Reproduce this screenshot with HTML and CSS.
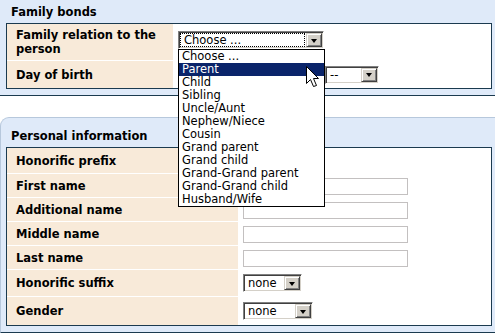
FILE: index.html
```html
<!DOCTYPE html>
<html lang="en">

<head>
    <meta charset="UTF-8">
    <title>Family bonds</title>
    <link rel="stylesheet" href="styles.css">
</head>

<body>
    <div class="panel panel-first">
        <h2 class="panel-title">Family bonds</h2>
        <div class="form-table bonds">
            <div class="label row-relation">Family relation to the person</div>
            <div class="value row-relation top">
                <div class="select choose">
                    <span class="select-text focus">Choose ...</span>
                    <span class="select-btn"><span class="arrow"></span></span>
                    <ul class="dropdown">
                        <li>Choose ...</li>
                        <li class="selected">Parent</li>
                        <li>Child</li>
                        <li>Sibling</li>
                        <li>Uncle/Aunt</li>
                        <li>Nephew/Niece</li>
                        <li>Cousin</li>
                        <li>Grand parent</li>
                        <li>Grand child</li>
                        <li>Grand-Grand parent</li>
                        <li>Grand-Grand child</li>
                        <li>Husband/Wife</li>
                    </ul>
                    <svg class="cursor" width="14" height="22" viewBox="0 0 14 22">
                        <path d="M0.5 0.5 L0.5 17.5 L4.5 13.5 L7.5 20.5 L10.5 19.5 L7.5 12.5 L12.5 12.5 Z" fill="#fff" stroke="#000" stroke-width="1" />
                    </svg>
                </div>
            </div>
            <div class="label row-birth">Day of birth</div>
            <div class="value row-birth">
                <div class="select day"><span class="select-text">--</span><span class="select-btn"><span class="arrow"></span></span></div>
                <div class="select month"><span class="select-text">--</span><span class="select-btn"><span class="arrow"></span></span></div>
                <div class="select year"><span class="select-text">--</span><span class="select-btn"><span class="arrow"></span></span></div>
            </div>
        </div>
    </div>

    <div class="panel panel-second">
        <h2 class="panel-title">Personal information</h2>
        <div class="form-table personal">
            <div class="label row-select">Honorific prefix</div>
            <div class="value row-select">
                <div class="select short"><span class="select-text">none</span><span class="select-btn"><span class="arrow"></span></span></div>
            </div>
            <div class="label row-text">First name</div>
            <div class="value row-text"><input class="text-input" type="text"></div>
            <div class="label row-text">Additional name</div>
            <div class="value row-text"><input class="text-input" type="text"></div>
            <div class="label row-text">Middle name</div>
            <div class="value row-text"><input class="text-input" type="text"></div>
            <div class="label row-text">Last name</div>
            <div class="value row-text"><input class="text-input" type="text"></div>
            <div class="label row-suffix">Honorific suffix</div>
            <div class="value row-suffix">
                <div class="select short"><span class="select-text">none</span><span class="select-btn"><span class="arrow"></span></span></div>
            </div>
            <div class="label row-gender">Gender</div>
            <div class="value row-gender">
                <div class="select gender"><span class="select-text">none</span><span class="select-btn"><span class="arrow"></span></span></div>
            </div>
        </div>
    </div>
</body>

</html>
```

FILE: styles.css
```css
body {
    margin: 0;
    background: #fff;
    font-family: "DejaVu Sans", Verdana, sans-serif;
    font-size: 11.5px;
    color: #000;
    overflow: hidden;
}

.panel {
    background-color: #dfeaf9;
    padding: 0 3px 6px 6px;
    border-bottom: 1px solid #1b3a4f;
}

.panel-second {
    margin-top: 21px;
    padding-left: 5px;
    border-top: 1px solid #b7c8dc;
    border-left: 1px solid #b7c8dc;
    border-top-left-radius: 9px;
}

.panel-title {
    margin: 0;
    padding: 4px 0 3px 5px;
    font-size: 11.5px;
    line-height: 16px;
    font-weight: bold;
}

.panel-second .panel-title {
    padding: 10px 0 3px 5px;
}

.form-table {
    display: grid;
    row-gap: 1px;
    border: 1px solid #1b3a4f;
    background-color: #fff;
}

.bonds {
    grid-template-columns: 166px 1fr;
}

.personal {
    grid-template-columns: 231px 1fr;
}

.label {
    background-color: #f8ead9;
    font-weight: bold;
    line-height: 14px;
    padding: 0 0 0 9px;
    display: flex;
    align-items: center;
}

.value {
    background-color: #fff;
    padding-left: 5px;
    display: flex;
    align-items: center;
    gap: 4px;
}

.value.top {
    align-items: flex-start;
    padding-top: 7px;
    box-sizing: border-box;
}

.row-relation {
    height: 36px;
}

.row-birth {
    height: 27px;
}

.row-select {
    height: 25px;
}

.row-text {
    height: 23px;
}

.row-suffix {
    height: 26px;
}

.row-gender {
    height: 28px;
}

/* classic windows style select */
.select {
    position: relative;
    display: flex;
    align-items: center;
    height: 18px;
    box-sizing: border-box;
    background: #fff;
    border-top: 1px solid #808080;
    border-left: 1px solid #808080;
    border-right: 1px solid #fff;
    border-bottom: 1px solid #fff;
    box-shadow: inset 1px 1px 0 #404040, inset -1px -1px 0 #d4d0c8;
    padding: 1px;
}

.select-text {
    flex: 1;
    padding-left: 3px;
    line-height: 14px;
    white-space: nowrap;
    overflow: hidden;
}

.select-text.focus {
    outline: 1px dotted #000;
    outline-offset: -1px;
    padding-left: 4px;
    margin-right: 1px;
}

.select-btn {
    width: 16px;
    height: 14px;
    box-sizing: border-box;
    background: #d4d0c8;
    border-top: 1px solid #d4d0c8;
    border-left: 1px solid #d4d0c8;
    border-right: 1px solid #404040;
    border-bottom: 1px solid #404040;
    box-shadow: inset 1px 1px 0 #fff, inset -1px -1px 0 #808080;
    display: flex;
    align-items: center;
    justify-content: center;
}

.arrow {
    width: 0;
    height: 0;
    border-left: 3.5px solid transparent;
    border-right: 3.5px solid transparent;
    border-top: 4px solid #000;
    margin-top: 1px;
}

.choose {
    width: 146px;
}

.day {
    width: 45px;
}

.month {
    width: 94px;
}

.year {
    width: 54px;
}

.short {
    width: 59px;
}

.gender {
    width: 70px;
}

.text-input {
    width: 165px;
    height: 17px;
    box-sizing: border-box;
    border: 1px solid #c3c0c0;
    margin: 1px 0 0 0;
    padding: 0;
    background: #fff;
}

.dropdown {
    position: absolute;
    z-index: 10;
    top: 17px;
    left: -1px;
    width: 147px;
    box-sizing: border-box;
    margin: 0;
    padding: 0;
    list-style: none;
    background: #fff;
    border: 1px solid #000;
}

.dropdown li {
    height: 13px;
    line-height: 13px;
    padding-left: 3px;
    white-space: nowrap;
}

.dropdown li.selected {
    background-color: #0a246a;
    color: #fff;
}

.cursor {
    position: absolute;
    z-index: 11;
    left: 127px;
    top: 34px;
}
```
